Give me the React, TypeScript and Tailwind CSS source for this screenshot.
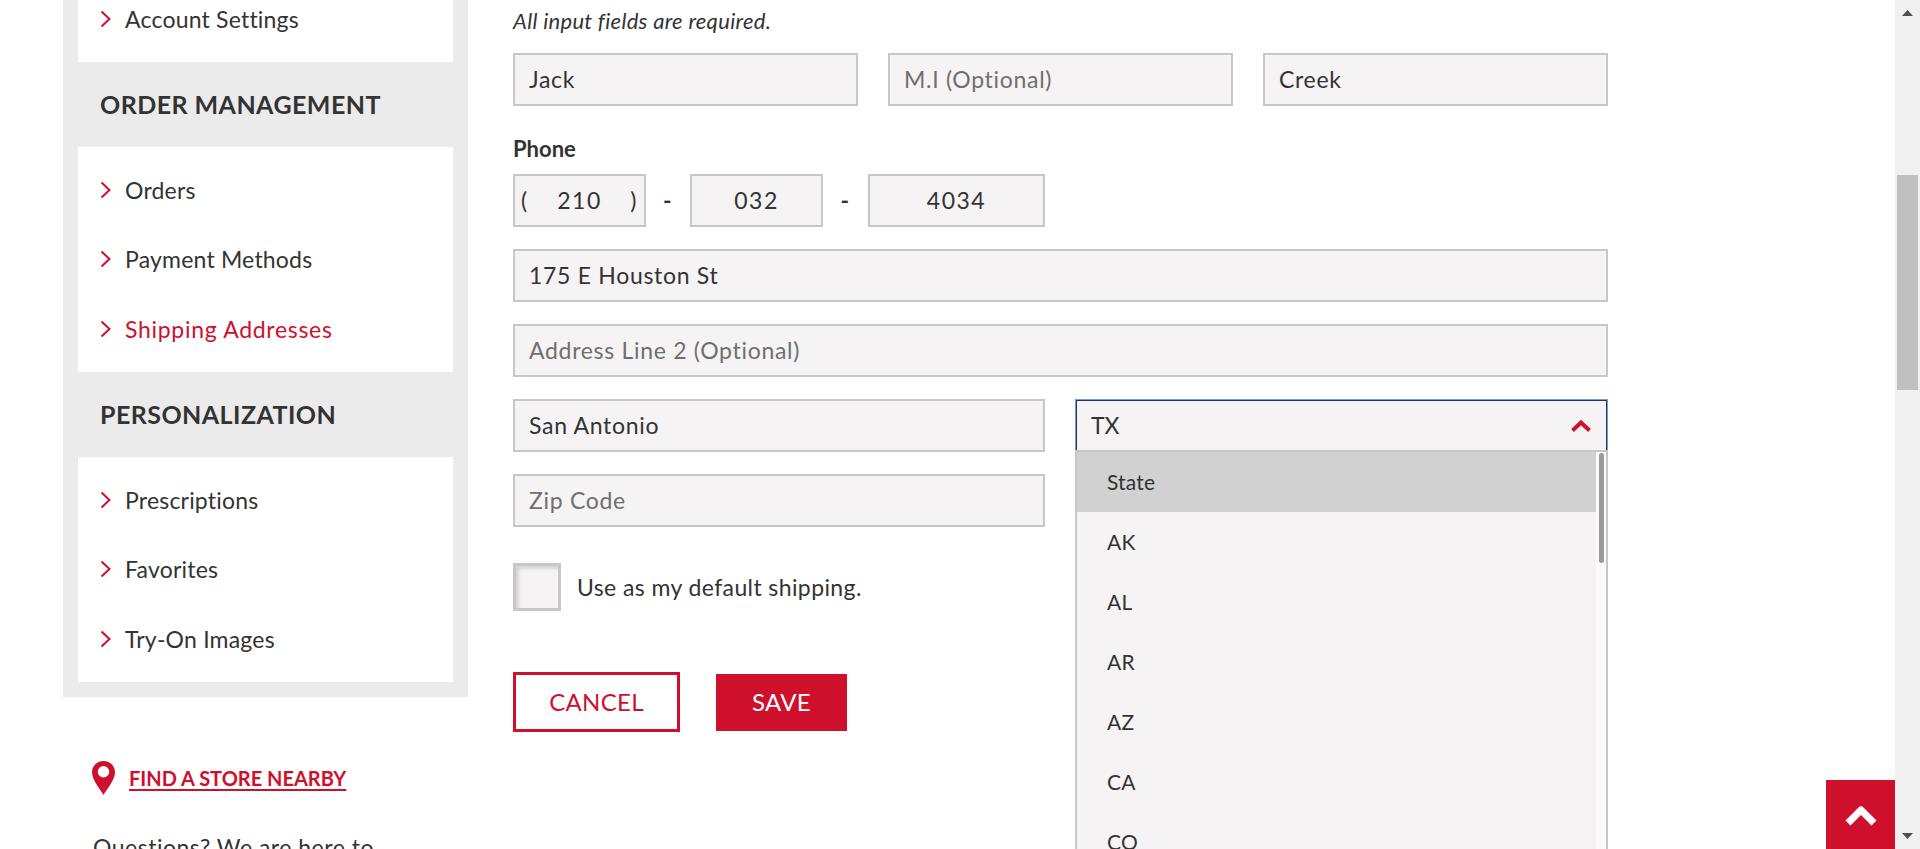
import React from 'react';

const font = "font-['Lato','Liberation_Sans',sans-serif]";

const orderLinks = [
  { label: 'Orders' },
  { label: 'Payment Methods' },
  { label: 'Shipping Addresses', active: true },
];
const personalLinks = [{ label: 'Prescriptions' }, { label: 'Favorites' }, { label: 'Try-On Images' }];
const states = ['AK', 'AL', 'AR', 'AZ', 'CA', 'CO'];

const Chevron = () => (
  <svg width="11" height="18" viewBox="0 0 11 18" fill="none" className="shrink-0">
    <path d="M1.5 1.5L9.5 9L1.5 16.5" stroke="#cf102d" strokeWidth="2" />
  </svg>
);

const NavItem = ({ label, active }: { label: string; active?: boolean }) => (
  <div className="flex h-[69.67px] items-center pl-[22px]">
    <Chevron />
    <span className={`ml-[14px] text-[23px] ${active ? 'text-[#cf102d] tracking-[0.7px]' : 'text-[#333333] tracking-[0.2px]'}`}>{label}</span>
  </div>
);

const NavHeading = ({ children }: { children: React.ReactNode }) => (
  <div className="flex h-[85px] items-center pl-[22px] text-[25px] font-bold text-[#333333] tracking-[0.45px]">{children}</div>
);

const Field = ({ value, placeholder, className = '' }: { value?: string; placeholder?: string; className?: string }) => (
  <div className={`flex h-[53px] items-center border-[2px] border-[#c9c6c7] bg-[#f5f3f4] pl-[14px] text-[23px] tracking-[0.7px] ${value ? 'text-[#333333]' : 'text-[#6f6f6f]'} ${className}`}>
    {value || placeholder}
  </div>
);

export default function App() {
  return (
    <div className={`flex h-[849px] w-[1920px] overflow-hidden bg-white ${font}`}>
      <div className="relative flex flex-1 pl-[63px]">
        {/* Sidebar */}
        <div className="w-[405px] shrink-0">
          <div className="bg-[#ebebeb] px-[15px] pb-[15px]">
            <div className="h-[62px] overflow-hidden bg-white">
              <div className="-mt-[16px]">
                <NavItem label="Account Settings" />
              </div>
            </div>
            <NavHeading>ORDER MANAGEMENT</NavHeading>
            <div className="bg-white py-[8px]">
              {orderLinks.map((l) => (
                <NavItem key={l.label} label={l.label} active={l.active} />
              ))}
            </div>
            <NavHeading>PERSONALIZATION</NavHeading>
            <div className="bg-white py-[8px]">
              {personalLinks.map((l) => (
                <NavItem key={l.label} label={l.label} />
              ))}
            </div>
          </div>

          <div className="mt-[64px] flex items-center pl-[29px]">
            <svg width="23" height="34" viewBox="0 0 23 34" className="shrink-0">
              <path
                fillRule="evenodd"
                fill="#cf102d"
                d="M11.5 0C5 0 0 5 0 11.5C0 19 8 28 11.5 34C15 28 23 19 23 11.5C23 5 18 0 11.5 0ZM11.5 5a5.7 5.7 0 1 1 0 11.4a5.7 5.7 0 1 1 0-11.4Z"
              />
            </svg>
            <span className="ml-[14px] text-[20px] font-bold text-[#cf102d] underline decoration-2 underline-offset-[3px]">
              FIND A STORE NEARBY
            </span>
          </div>
          <div className="mt-[38px] pl-[30px] text-[23px] leading-[28px] tracking-[0.5px] text-[#333333]">Questions? We are here to</div>
        </div>

        {/* Form */}
        <div className="ml-[45px] w-[1095px] shrink-0">
          <div className="flex h-[53px] items-start pt-[4px] text-[22px] italic tracking-[0.3px] text-[#333333]">All input fields are required.</div>
          <div className="flex gap-[30px]">
            <Field value="Jack" className="w-[345px]" />
            <Field placeholder="M.I (Optional)" className="w-[345px]" />
            <Field value="Creek" className="w-[345px]" />
          </div>

          <div className="mt-[29px] text-[22px] leading-[28px] font-bold text-[#333333]">Phone</div>
          <div className="mt-[11px] flex items-center text-[23px] tracking-[1.5px] text-[#333333]">
            <div className="flex h-[53px] w-[133px] items-center justify-between border-[2px] border-[#c9c6c7] bg-[#f5f3f4] px-[6px]">
              <span>(</span>
              <span>210</span>
              <span>)</span>
            </div>
            <span className="w-[44px] text-center font-bold">-</span>
            <div className="flex h-[53px] w-[133px] items-center justify-center border-[2px] border-[#c9c6c7] bg-[#f5f3f4]">032</div>
            <span className="w-[45px] text-center font-bold">-</span>
            <div className="flex h-[53px] w-[177px] items-center justify-center border-[2px] border-[#c9c6c7] bg-[#f5f3f4]">4034</div>
          </div>

          <Field value="175 E Houston St" className="mt-[22px]" />
          <Field placeholder="Address Line 2 (Optional)" className="mt-[22px]" />

          <div className="mt-[22px] flex gap-[30px]">
            <div className="w-[532px] shrink-0">
              <Field value="San Antonio" />
              <Field placeholder="Zip Code" className="mt-[22px]" />
              <div className="mt-[36px] flex items-center">
                <div className="h-[48px] w-[48px] border-[3px] border-[#c9c6c7] bg-[#f5f3f4] shadow-[inset_3px_3px_3px_rgba(0,0,0,0.12)]" />
                <span className="ml-[16px] text-[23px] tracking-[0.4px] text-[#333333]">Use as my default shipping.</span>
              </div>
              <div className="mt-[61px] flex items-center">
                <button className="h-[60px] w-[167px] border-[3px] border-[#cf102d] bg-white text-[24px] tracking-[0.3px] text-[#cf102d]">CANCEL</button>
                <button className="ml-[36px] h-[57px] w-[131px] bg-[#cf102d] text-[24px] tracking-[0.3px] text-white">SAVE</button>
              </div>
            </div>

            {/* State select, open */}
            <div className="relative w-[533px] shrink-0">
              <div className="flex h-[53px] items-center justify-between border border-[#6d9eeb] bg-[#f5f3f4] pl-[15px] pr-[16px] text-[23px] text-[#333333] shadow-[inset_0_0_0_1px_#2a3448]">
                <span>TX</span>
                <svg width="20" height="13" viewBox="0 0 20 13" fill="none">
                  <path d="M1.5 11.5L10 3.5L18.5 11.5" stroke="#cf102d" strokeWidth="4" />
                </svg>
              </div>
              <div className="absolute left-0 top-[51px] z-10 flex w-[533px] border-x-[2px] border-t-[2px] border-[#c9c6c7] bg-[#f5f3f4]">
                <div className="flex-1 text-[21px] tracking-[0.2px] text-[#333333]">
                  <div className="flex h-[60px] items-center bg-[#d1d1d1] pl-[30px]">State</div>
                  {states.map((s) => (
                    <div key={s} className="flex h-[60px] items-center pl-[30px]">
                      {s}
                    </div>
                  ))}
                </div>
                <div className="w-[10px] shrink-0 bg-[#fafafa] pt-[1px] pl-[3px]">
                  <div className="h-[110px] w-[5px] rounded-[3px] bg-[#9a9a9a]" />
                </div>
              </div>
            </div>
          </div>
        </div>

        {/* Back to top */}
        <div className="absolute bottom-0 right-0 z-20 flex h-[69px] w-[69px] items-center justify-center bg-[#cf102d]">
          <svg width="34" height="24" viewBox="0 0 34 24" fill="none">
            <path d="M4 20L17 7L30 20" stroke="white" strokeWidth="7" strokeLinejoin="round" />
          </svg>
        </div>
      </div>

      {/* Page scrollbar */}
      <div className="flex w-[25px] shrink-0 flex-col items-center bg-[#f0f0f0]">
        <svg width="11" height="6" viewBox="0 0 11 6" className="mt-[10px]">
          <path d="M5.5 0L11 6H0Z" fill="#505050" />
        </svg>
        <div className="mt-[159px] h-[215px] w-[21px] bg-[#c0c0c0]" />
        <svg width="11" height="6" viewBox="0 0 11 6" className="mt-auto mb-[10px]">
          <path d="M5.5 6L11 0H0Z" fill="#505050" />
        </svg>
      </div>
    </div>
  );
}
